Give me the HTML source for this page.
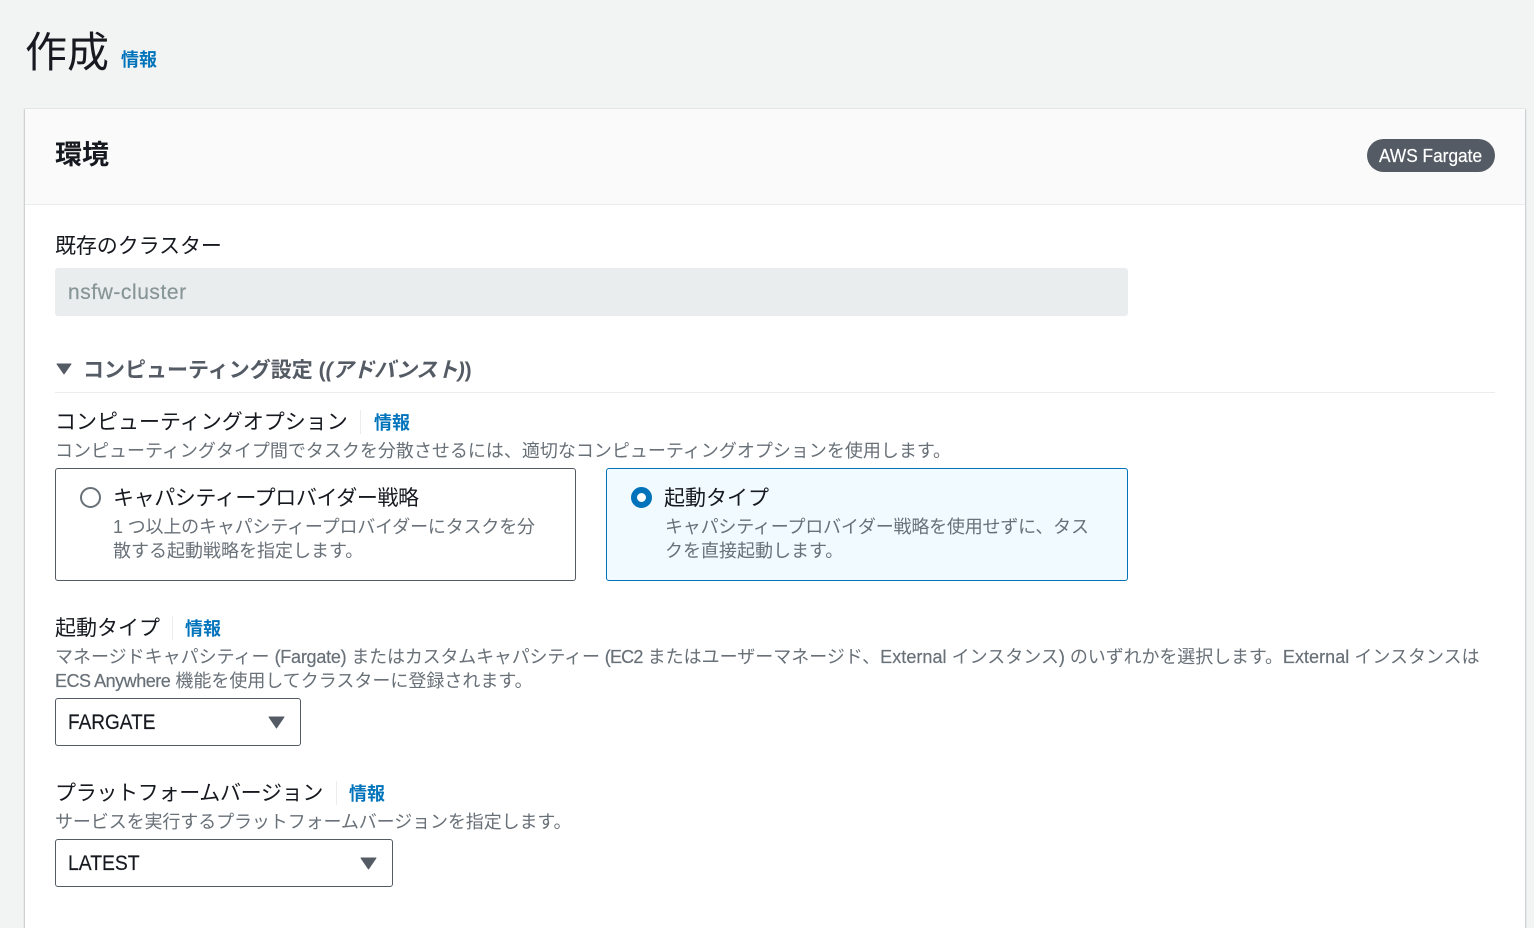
<!DOCTYPE html>
<html lang="ja"><head><meta charset="utf-8">
<style>
html,body{margin:0;padding:0;width:1534px;height:928px;overflow:hidden;background:#f2f3f3}
body{position:relative;font-family:"Liberation Sans","Noto Sans CJK JP",sans-serif;color:#16191f}
.t{position:absolute;white-space:nowrap;line-height:30px;font-size:21px}
.d{font-size:18px;color:#687078;line-height:24px}
.l{color:#0073bb;font-size:18px;font-weight:700;line-height:24px}
.box{position:absolute;box-sizing:border-box}
.sep{position:absolute;width:1px;background:#eaeded}
.lat{-webkit-text-stroke:.2px currentColor}
</style></head><body>
<div class="t" style="left:25px;top:28px;font-size:42px;line-height:50px">作成</div>
<div class="t l" style="left:121px;top:48px">情報</div>

<div class="box" style="left:25px;top:109px;width:1500px;height:830px;background:#fff;box-shadow:-1px 0 1px #c5cbcc,1px 0 1px #c5cbcc"></div>
<div class="box" style="left:25px;top:109px;width:1500px;height:96px;background:#fafafa;border-bottom:1px solid #eaeded"></div>
<div class="t" style="left:55px;top:135px;font-size:27px;line-height:40px;font-weight:700">環境</div>
<div class="box" style="left:1367px;top:139px;width:128px;height:33px;border-radius:17px;background:#545b64"></div>
<div class="t lat" style="left:1379px;top:142px;color:#fff;font-size:18px;line-height:29px;transform:scaleX(.96);transform-origin:0 0">AWS Fargate</div>

<div class="t" style="left:55px;top:232px;letter-spacing:-.1px">既存のクラスター</div>
<div class="box" style="left:55px;top:268px;width:1073px;height:48px;background:#eaeded;border-radius:3px"></div>
<div class="t lat" style="left:68px;top:278px;color:#879596;letter-spacing:.55px">nsfw-cluster</div>

<svg class="box" style="left:56px;top:363px" width="16" height="12" viewBox="0 0 16 12"><path d="M1 1H15L8 11Z" fill="#545b64" stroke="#545b64" stroke-linejoin="round"/></svg>
<div class="t" style="left:83px;top:356px;font-weight:700;color:#545b64">コンピューティング設定 (<i style="letter-spacing:-.2px">(アドバンスト)</i>)</div>
<div class="box" style="left:55px;top:392px;width:1440px;height:1px;background:#eaeded"></div>

<div class="t" style="left:55px;top:408px">コンピューティングオプション</div>
<div class="sep" style="left:360px;top:410px;height:24px"></div>
<div class="t l" style="left:374px;top:411px">情報</div>
<div class="t d" style="left:55px;top:439px">コンピューティングタイプ間でタスクを分散させるには、適切なコンピューティングオプションを使用します。</div>

<div class="box" style="left:55px;top:468px;width:521px;height:113px;border:1px solid #545b64;border-radius:3px;background:#fff"></div>
<div class="box" style="left:80px;top:487px;width:21px;height:21px;border:2px solid #687078;border-radius:50%;background:#fff"></div>
<div class="t" style="left:113px;top:484px;letter-spacing:-.4px">キャパシティープロバイダー戦略</div>
<div class="t d" style="left:113px;top:515px;letter-spacing:-.17px">1 つ以上のキャパシティープロバイダーにタスクを分</div>
<div class="t d" style="left:113px;top:539px">散する起動戦略を指定します。</div>

<div class="box" style="left:606px;top:468px;width:522px;height:113px;border:1px solid #0073bb;border-radius:3px;background:#f1faff"></div>
<div class="box" style="left:631px;top:487px;width:21px;height:21px;border:6px solid #0073bb;border-radius:50%;background:#fff"></div>
<div class="t" style="left:664px;top:484px">起動タイプ</div>
<div class="t d" style="left:665px;top:515px;letter-spacing:-.2px">キャパシティープロバイダー戦略を使用せずに、タス</div>
<div class="t d" style="left:665px;top:539px">クを直接起動します。</div>

<div class="t" style="left:55px;top:614px">起動タイプ</div>
<div class="sep" style="left:172px;top:616px;height:24px"></div>
<div class="t l" style="left:185px;top:617px">情報</div>
<div class="t d" style="left:55px;top:645px">マネージドキャパシティー <span class="lat" style="letter-spacing:-.25px">(Fargate)</span> <span style="letter-spacing:-.18px">またはカスタムキャパシティー</span> <span class="lat" style="letter-spacing:-.8px">(EC2</span> またはユーザーマネージド、<span class="lat" style="letter-spacing:.05px">External</span> インスタンス<span class="lat">)</span> <span style="letter-spacing:-.1px">のいずれかを選択します。</span><span class="lat" style="letter-spacing:.05px">External</span> インスタンスは</div>
<div class="t d" style="left:55px;top:669px"><span class="lat" style="letter-spacing:-.48px">ECS Anywhere</span> 機能を使用してクラスターに登録されます。</div>

<div class="box" style="left:55px;top:698px;width:246px;height:48px;border:1px solid #545b64;border-radius:3px;background:#fff"></div>
<div class="t lat" style="left:68px;top:708px;transform:scaleX(.906);transform-origin:0 0">FARGATE</div>
<svg class="box" style="left:268px;top:716px" width="17" height="13" viewBox="0 0 17 13"><path d="M1 1H16L8.5 12Z" fill="#545b64" stroke="#545b64" stroke-linejoin="round"/></svg>

<div class="t" style="left:55px;top:779px;letter-spacing:-.3px">プラットフォームバージョン</div>
<div class="sep" style="left:336px;top:781px;height:24px"></div>
<div class="t l" style="left:349px;top:782px">情報</div>
<div class="t d" style="left:55px;top:810px;letter-spacing:-.1px">サービスを実行するプラットフォームバージョンを指定します。</div>

<div class="box" style="left:55px;top:839px;width:338px;height:48px;border:1px solid #545b64;border-radius:3px;background:#fff"></div>
<div class="t lat" style="left:68px;top:849px;transform:scaleX(.92);transform-origin:0 0">LATEST</div>
<svg class="box" style="left:360px;top:857px" width="17" height="13" viewBox="0 0 17 13"><path d="M1 1H16L8.5 12Z" fill="#545b64" stroke="#545b64" stroke-linejoin="round"/></svg>
</body></html>
